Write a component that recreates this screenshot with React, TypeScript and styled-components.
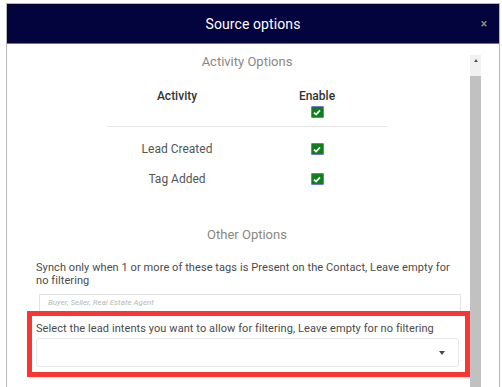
import React from "react";
import styled, { createGlobalStyle } from "styled-components";

const GlobalStyle = createGlobalStyle`
  html, body {
    margin: 0;
    padding: 0;
    background: #ffffff;
    overflow: hidden;
  }
  body {
    font-family: Roboto, "Liberation Sans", Arial, sans-serif;
  }
`;

const Page = styled.div`
  height: 387px;
  padding: 3px 0 0 6px;
  box-sizing: border-box;
  overflow: hidden;
`;

const Dialog = styled.div`
  width: 494px;
  height: 400px;
  box-sizing: border-box;
  border: 1px solid #b7b7b7;
  border-bottom: none;
  display: flex;
  flex-direction: column;
`;

const Header = styled.div`
  height: 40px;
  flex: none;
  background: #03033d;
  border-bottom: 1px solid #6f6f96;
  box-sizing: border-box;
  display: grid;
  grid-template-columns: 40px 1fr 40px;
  align-items: center;
`;

const Title = styled.h1`
  grid-column: 2;
  margin: 1px 0 0;
  text-align: center;
  color: #ffffff;
  font-size: 14px;
  font-weight: 400;
  letter-spacing: 0.1px;
`;

const Close = styled.span`
  justify-self: end;
  margin-right: 12px;
  color: #8f8b7a;
  font-size: 12px;
  font-weight: 700;
  line-height: 1;
`;

const Body = styled.div`
  flex: 1;
  display: flex;
  padding: 0 18px 0 17px;
`;

const Content = styled.div`
  flex: 1;
  min-width: 0;
`;

const Scrollbar = styled.div`
  width: 11px;
  flex: none;
  margin-top: 11px;
  display: flex;
  flex-direction: column;
`;

const ScrollButton = styled.div`
  height: 21px;
  background: #f1f1f1;
  display: flex;
  justify-content: center;
  padding-top: 4px;
  box-sizing: border-box;
`;

const ScrollThumb = styled.div`
  flex: 1;
  background: #c1c1c1;
`;

const SectionTitle = styled.h2<{ $top: number }>`
  margin: ${(p) => p.$top}px 0 0;
  text-align: center;
  color: #8b897e;
  font-size: 13px;
  font-weight: 400;
  line-height: 16px;
`;

const Table = styled.div`
  width: 280px;
  margin: 19px auto 0;
`;

const HeadRow = styled.div`
  display: grid;
  grid-template-columns: 1fr 1fr;
  border-bottom: 1px solid #e6e6e6;
  padding-bottom: 8px;
`;

const HeadCell = styled.div`
  display: flex;
  flex-direction: column;
  align-items: center;
  gap: 3px;
  color: #333333;
  font-size: 12px;
  font-weight: 500;
  line-height: 14px;
`;

const Rows = styled.div`
  padding-top: 7px;
`;

const Row = styled.div`
  display: grid;
  grid-template-columns: 1fr 1fr;
  height: 30px;
  align-items: center;
  justify-items: center;
  color: #555555;
  font-size: 12px;
`;

const Check = styled.span`
  width: 13px;
  height: 12px;
  box-sizing: border-box;
  background: #0e7f1b;
  border: 1px solid #7d73d6;
  border-radius: 1px;
  display: flex;
  align-items: center;
  justify-content: center;
`;

const HelpText = styled.p<{ $top: number }>`
  margin: ${(p) => p.$top}px 0 0;
  color: #4a4a4a;
  font-size: 11px;
  line-height: 13px;
  letter-spacing: 0.08px;
`;

const TagsBlock = styled.div`
  padding: 0 14px 0 12px;
`;

const TagInput = styled.div`
  margin: 7px -5px 0 3px;
  height: 17px;
  box-sizing: border-box;
  border: 1px solid #e3e3e3;
  border-bottom: none;
  padding: 3px 0 0 8px;
  color: #b9b9b9;
  font-size: 8px;
  font-style: italic;
  line-height: 10px;
`;

const Highlight = styled.div`
  margin-left: 3px;
  border: 5px solid #fb3434;
  padding: 6px 6px 5px 4px;
`;

const Select = styled.div`
  margin-top: 3px;
  height: 29px;
  box-sizing: border-box;
  border: 1px solid #e8e8e8;
  border-radius: 3px;
  display: flex;
  align-items: center;
  justify-content: flex-end;
  padding-right: 13px;
`;

const Caret = styled.span`
  width: 0;
  height: 0;
  border-left: 3px solid transparent;
  border-right: 3px solid transparent;
  border-top: 4px solid #4a4a4a;
`;

const UpArrow = styled.span`
  width: 0;
  height: 0;
  border-left: 2.5px solid transparent;
  border-right: 2.5px solid transparent;
  border-bottom: 3px solid #555555;
`;

function Tick() {
  return (
    <svg width="8" height="7" viewBox="0 0 8 7">
      <path d="M1 3.6 L3.1 5.6 L7 1.4" fill="none" stroke="#ffffff" strokeWidth="1.7" />
    </svg>
  );
}

const activities = ["Lead Created", "Tag Added"];

export default function App() {
  return (
    <>
      <GlobalStyle />
      <Page>
        <Dialog>
          <Header>
            <Title>Source options</Title>
            <Close>×</Close>
          </Header>
          <Body>
            <Content>
              <SectionTitle $top={10}>Activity Options</SectionTitle>
              <Table>
                <HeadRow>
                  <HeadCell>Activity</HeadCell>
                  <HeadCell>
                    Enable
                    <Check>
                      <Tick />
                    </Check>
                  </HeadCell>
                </HeadRow>
                <Rows>
                  {activities.map((name) => (
                    <Row key={name}>
                      <span>{name}</span>
                      <Check>
                        <Tick />
                      </Check>
                    </Row>
                  ))}
                </Rows>
              </Table>
              <SectionTitle $top={33}>Other Options</SectionTitle>
              <TagsBlock>
                <HelpText $top={18}>
                  Synch only when 1 or more of these tags is Present on the Contact, Leave empty for
                  no filtering
                </HelpText>
                <TagInput>Buyer, Seller, Real Estate Agent</TagInput>
              </TagsBlock>
              <Highlight>
                <HelpText $top={0}>
                  Select the lead intents you want to allow for filtering, Leave empty for no filtering
                </HelpText>
                <Select>
                  <Caret />
                </Select>
              </Highlight>
            </Content>
            <Scrollbar>
              <ScrollButton>
                <UpArrow />
              </ScrollButton>
              <ScrollThumb />
            </Scrollbar>
          </Body>
        </Dialog>
      </Page>
    </>
  );
}
